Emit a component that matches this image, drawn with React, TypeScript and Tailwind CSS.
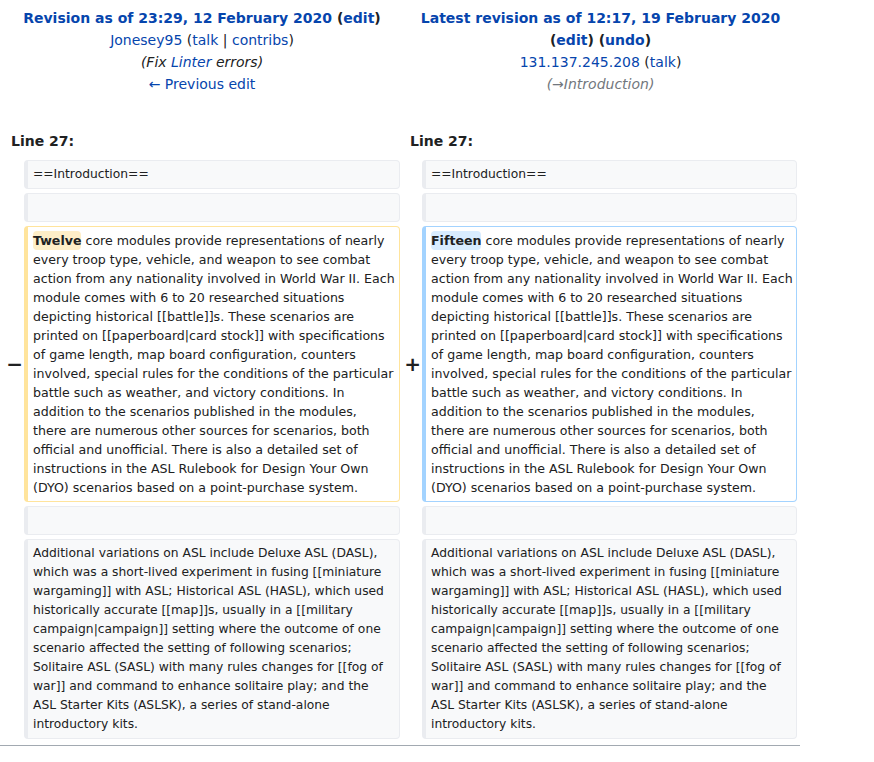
const font = { fontFamily: '"DejaVu Sans", Verdana, sans-serif' };

// wrapped as in the diff view
const deletedLines = [
  'core modules provide representations of nearly',
  'every troop type, vehicle, and weapon to see combat',
  'action from any nationality involved in World War II. Each',
  'module comes with 6 to 20 researched situations',
  'depicting historical [[battle]]s. These scenarios are',
  'printed on [[paperboard|card stock]] with specifications',
  'of game length, map board configuration, counters',
  'involved, special rules for the conditions of the particular',
  'battle such as weather, and victory conditions. In',
  'addition to the scenarios published in the modules,',
  'there are numerous other sources for scenarios, both',
  'official and unofficial. There is also a detailed set of',
  'instructions in the ASL Rulebook for Design Your Own',
  '(DYO) scenarios based on a point-purchase system.',
];

const additional =
  'Additional variations on ASL include Deluxe ASL (DASL), which was a short-lived experiment in fusing [[miniature wargaming]] with ASL; Historical ASL (HASL), which used historically accurate [[map]]s, usually in a [[military campaign|campaign]] setting where the outcome of one scenario affected the setting of following scenarios; Solitaire ASL (SASL) with many rules changes for [[fog of war]] and command to enhance solitaire play; and the ASL Starter Kits (ASLSK), a series of stand-alone introductory kits.';

type Kind = 'context' | 'deleted' | 'added';

function Cell({ kind, children }: { kind: Kind; children?: React.ReactNode }) {
  const colors =
    kind === 'deleted'
      ? 'border-[#ffe49c] text-[12.6px]'
      : kind === 'added'
        ? 'border-[#a3d3ff] text-[12.6px]'
        : 'border-[#eaecf0] bg-[#f8f9fa] text-[12.3px]';
  return (
    <div
      className={`min-h-[29px] rounded-[4px] border border-l-4 px-[5px] py-[4px] leading-[19px] whitespace-pre-wrap text-[#202122] ${colors}`}
    >
      {children}
    </div>
  );
}

function Marker({ sign }: { sign?: string }) {
  return (
    <div className="-mr-[3px] flex items-center justify-end text-[20px] font-bold leading-[1.2] text-[#202122]">
      {sign}
    </div>
  );
}

function ChangedText({ word, bg }: { word: string; bg: string }) {
  return (
    <>
      {deletedLines.map((line, i) => (
        <div key={i} className="whitespace-nowrap">
          {i === 0 && (
            <>
              <span className={`rounded-[4px] py-[2px] font-bold ${bg}`}>{word}</span>{' '}
            </>
          )}
          {line}
        </div>
      ))}
    </>
  );
}

const link = 'text-[#0645ad]';

export default function App() {
  return (
    <div style={font} className="w-[874px] bg-white text-[14px] text-[#202122]">
      <div className="w-[800px] pl-[4px] pt-[7px]">
        <div className="grid grid-cols-[16px_376px_14px_375px] gap-x-[4px]">
          <div className="col-span-2 text-center leading-[22px]">
            <div className="font-bold">
              <span className={link}>Revision as of 23:29, 12 February 2020</span> (
              <span className={link}>edit</span>)
            </div>
            <div>
              <span className={link}>Jonesey95</span> (<span className={link}>talk</span> |{' '}
              <span className={link}>contribs</span>)
            </div>
            <div className="italic">
              (Fix <span className={link}>Linter</span> errors)
            </div>
            <div className={link}>← Previous edit</div>
          </div>
          <div className="col-span-2 text-center leading-[22px]">
            <div className={`font-bold ${link}`}>Latest revision as of 12:17, 19 February 2020</div>
            <div className="font-bold">
              (<span className={link}>edit</span>) (<span className={link}>undo</span>)
            </div>
            <div>
              <span className={link}>131.137.245.208</span> (<span className={link}>talk</span>)
            </div>
            <div className="italic text-[#72777d]">(→Introduction)</div>
          </div>

          <div className="col-span-2 mt-[35px] pl-[7px] font-bold leading-[22px]">Line 27:</div>
          <div className="col-span-2 mt-[35px] pl-[6px] font-bold leading-[22px]">Line 27:</div>
        </div>

        <div className="mt-[8px] grid grid-cols-[16px_376px_14px_375px] gap-x-[4px] gap-y-[4px]">
          <Marker />
          <Cell kind="context">==Introduction==</Cell>
          <Marker />
          <Cell kind="context">==Introduction==</Cell>

          <Marker />
          <Cell kind="context" />
          <Marker />
          <Cell kind="context" />

          <Marker sign="−" />
          <Cell kind="deleted">
            <ChangedText word="Twelve" bg="bg-[#feeec8]" />
          </Cell>
          <Marker sign="+" />
          <Cell kind="added">
            <ChangedText word="Fifteen" bg="bg-[#d8ecff]" />
          </Cell>

          <Marker />
          <Cell kind="context" />
          <Marker />
          <Cell kind="context" />

          <Marker />
          <Cell kind="context">{additional}</Cell>
          <Marker />
          <Cell kind="context">{additional}</Cell>
        </div>
      </div>
      <div className="mt-[6px] h-px w-[800px] bg-[#a2a9b1]" />
    </div>
  );
}
